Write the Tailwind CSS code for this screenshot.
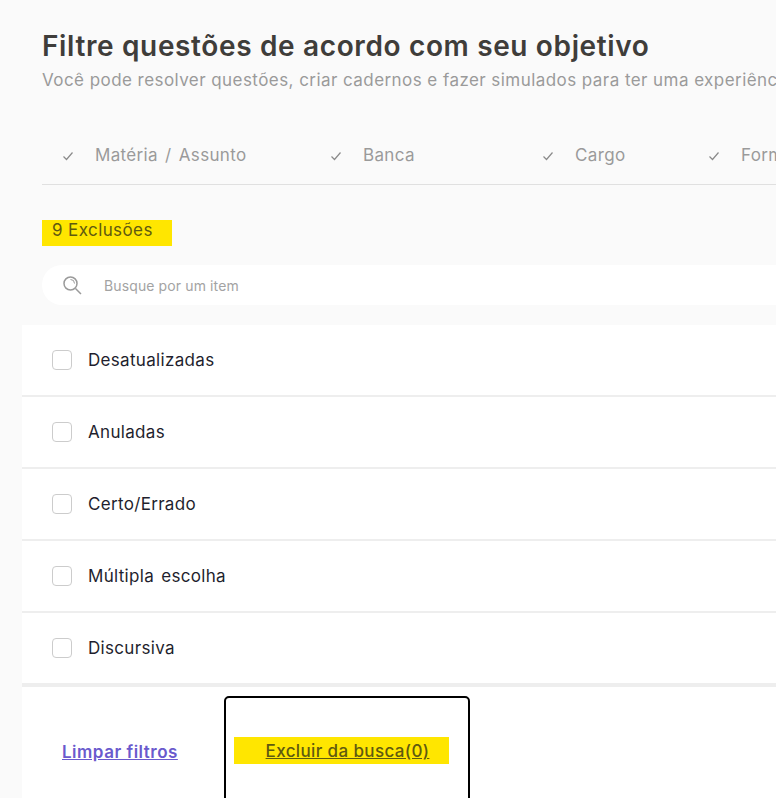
<!DOCTYPE html>
<html lang="en">
<head>
<meta charset="UTF-8">
<title>Filtre</title>
<script src="https://cdn.jsdelivr.net/npm/@tailwindcss/browser@4"></script>
</head>
<body class="bg-[#fafafa] h-[798px] w-[776px] overflow-hidden font-['Inter',sans-serif]">
  <div class="pl-[42px] pt-[29px]">
    <h1 class="text-[28px] leading-[34px] font-semibold tracking-[0.64px] text-[#3f3d3a] whitespace-nowrap">Filtre questões de acordo com seu objetivo</h1>
    <p class="mt-[1px] text-[17px] leading-[32px] tracking-[0.44px] text-[#9a9a9a] whitespace-nowrap">Você pode resolver questões, criar cadernos e fazer simulados para ter uma experiência completa</p>
    <div class="mt-[47px] h-[42px] border-b border-[#e0e0e0] flex text-[17px] leading-[24px] tracking-[0.35px] [word-spacing:2px] text-[#9a9a9a] whitespace-nowrap">
      <div class="w-[288px] shrink-0 pl-[20px] flex items-start">
        <svg class="mt-[7px] mr-[21px]" width="12" height="12" viewBox="0 0 12 12" fill="none" stroke="#8a8a8a" stroke-width="1.2"><path d="M1.5 6.5 4.5 9.5 10.5 2.5"/></svg>Matéria / Assunto
      </div>
      <div class="w-[212px] shrink-0 flex items-start">
        <svg class="mt-[7px] mr-[21px]" width="12" height="12" viewBox="0 0 12 12" fill="none" stroke="#8a8a8a" stroke-width="1.2"><path d="M1.5 6.5 4.5 9.5 10.5 2.5"/></svg>Banca
      </div>
      <div class="w-[166px] shrink-0 flex items-start">
        <svg class="mt-[7px] mr-[21px]" width="12" height="12" viewBox="0 0 12 12" fill="none" stroke="#8a8a8a" stroke-width="1.2"><path d="M1.5 6.5 4.5 9.5 10.5 2.5"/></svg>Cargo
      </div>
      <div class="shrink-0 flex items-start">
        <svg class="mt-[7px] mr-[21px]" width="12" height="12" viewBox="0 0 12 12" fill="none" stroke="#8a8a8a" stroke-width="1.2"><path d="M1.5 6.5 4.5 9.5 10.5 2.5"/></svg>Formato
      </div>
    </div>
    <div class="mt-[35px] w-[130px] h-[26px] bg-[#ffe600] pl-[10px] text-[17px] leading-[20px] tracking-[0.4px] text-[#5f5a10]">9 Exclusões</div>
    <div class="mt-[19px] h-[40px] bg-white rounded-l-[20px] flex items-center pl-[20px]">
      <svg width="20" height="20" viewBox="0 0 20 20" fill="none" stroke="#9a9a9a" stroke-width="1.5"><circle cx="8.5" cy="8.5" r="6.5"/><path d="M13.5 13.5 19 19"/><path d="M8.5 4.5a4 4 0 0 1 4 4" stroke-width="1"/></svg>
      <span class="ml-[22px] mt-[1px] text-[14px] tracking-[0.12px] text-[#a3a3a3]">Busque por um item</span>
    </div>
  </div>
  <ul class="mt-[20px] ml-[22px] bg-white text-[17px] tracking-[0.32px] [word-spacing:2px] text-[#1f1f2e]">
    <li class="h-[72px] border-b-2 border-[#eeeeee] flex items-center pl-[30px] gap-[16px]"><span class="w-[20px] h-[20px] rounded-[4px] border border-[#cccccc] bg-white"></span><span class="mt-[1px]">Desatualizadas</span></li>
    <li class="h-[72px] border-b-2 border-[#eeeeee] flex items-center pl-[30px] gap-[16px]"><span class="w-[20px] h-[20px] rounded-[4px] border border-[#cccccc] bg-white"></span><span class="mt-[1px]">Anuladas</span></li>
    <li class="h-[72px] border-b-2 border-[#eeeeee] flex items-center pl-[30px] gap-[16px]"><span class="w-[20px] h-[20px] rounded-[4px] border border-[#cccccc] bg-white"></span><span class="mt-[1px]">Certo/Errado</span></li>
    <li class="h-[72px] border-b-2 border-[#eeeeee] flex items-center pl-[30px] gap-[16px]"><span class="w-[20px] h-[20px] rounded-[4px] border border-[#cccccc] bg-white"></span><span class="mt-[1px]">Múltipla escolha</span></li>
    <li class="h-[70px] flex items-center pl-[30px] gap-[16px]"><span class="w-[20px] h-[20px] rounded-[4px] border border-[#cccccc] bg-white"></span><span class="mt-[1px]">Discursiva</span></li>
  </ul>
  <div class="ml-[22px] h-[120px] bg-white border-t-4 border-[#eeeeee] flex items-start">
    <a href="#" class="mt-[53px] ml-[40px] w-[162px] text-[17px] leading-[24px] font-semibold tracking-[0.5px] underline text-[#6a5acd]">Limpar filtros</a>
    <div class="mt-[9px] w-[246px] h-[120px] border-2 border-black rounded-[5px] pl-[8px] pt-[39px]">
      <div class="w-[215px] h-[27px] bg-[#ffe600] pl-[12px] text-center text-[17px] leading-[28px] font-medium tracking-[0.37px] underline text-[#5f5a10]">Excluir da busca(0)</div>
    </div>
  </div>
</body>
</html>
